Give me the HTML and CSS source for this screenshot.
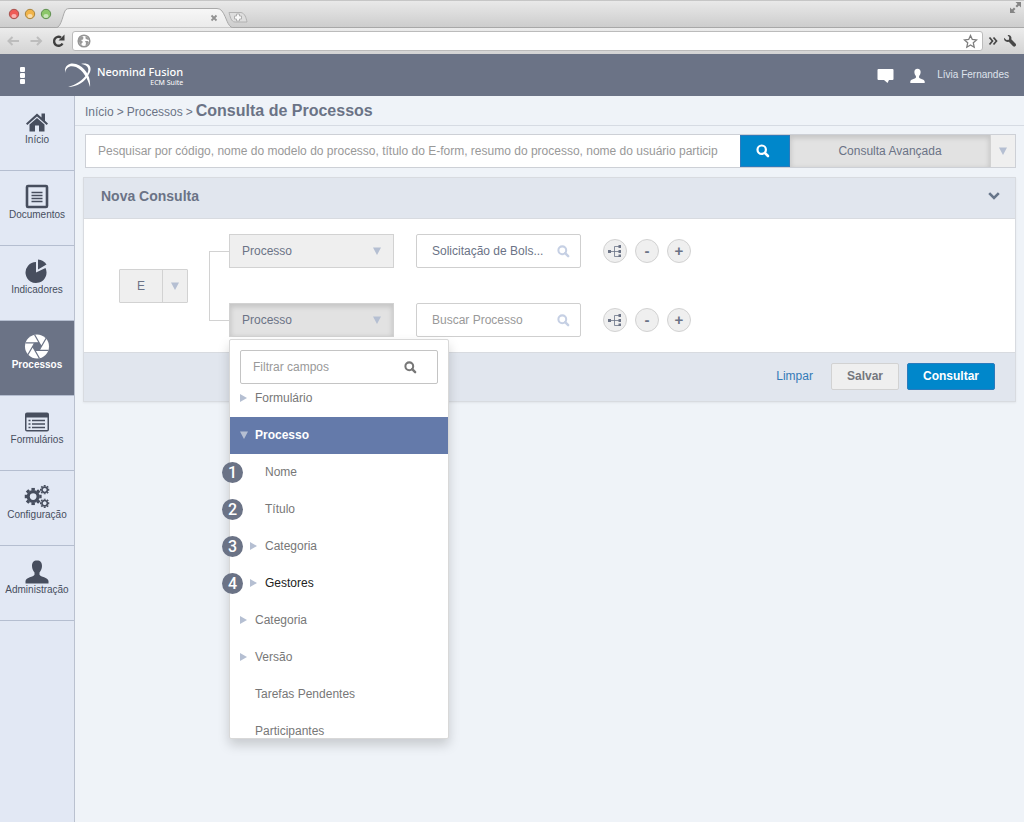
FILE: index.html
```html
<!DOCTYPE html>
<html lang="pt-BR">
<head>
<meta charset="utf-8">
<title>Consulta de Processos</title>
<link rel="stylesheet" href="styles.css">
</head>
<body>
<svg class="sprite" aria-hidden="true">
  <symbol id="search" viewBox="0 0 14 14"><circle cx="5.700" cy="5.700" r="4.200" fill="none" stroke="currentColor" stroke-width="2.200"/><path d="M8.800 8.800 12 12" stroke="currentColor" stroke-width="2.600" stroke-linecap="round"/></symbol>
  <symbol id="user" viewBox="0 0 24 24"><path d="M12 1C8.500 1 7 3 7 6.500 7 9.500 8.300 11.500 9.500 13v2.300C8.500 17.500 1 18 .5 21.500V24h23v-2.500C23 18 15.500 17.500 14.500 15.300V13C15.700 11.500 17 9.500 17 6.500 17 3 15.500 1 12 1z" fill="currentColor"/></symbol>
  <symbol id="tree" viewBox="0 0 14 12"><path d="M2 6.500h9M6.500 1.500v10M6.500 1.500H11M6.500 11.500H11" fill="none" stroke="currentColor" stroke-width=".8"/><path d="M0 5h3v3H0zM10.500 0h2.500v3h-2.500zM10.500 5h2.500v3h-2.500zM10.500 9.500h2.500V12h-2.500z" fill="currentColor"/></symbol>
  <symbol id="gear" viewBox="-10 -10 20 20"><circle r="5.700" fill="none" stroke="currentColor" stroke-width="3.600"/><path d="M-2-10h4v3h-4zM-2 7h4v3h-4zM-10-2h3v4h-3zM7-2h3v4H7z" fill="currentColor"/><path d="M-2-10h4v3h-4zM-2 7h4v3h-4zM-10-2h3v4h-3zM7-2h3v4H7z" fill="currentColor" transform="rotate(45)"/></symbol>
  <symbol id="right" viewBox="0 0 8 8"><path d="M0 0 7 4 0 8z" fill="#b5bfd2"/></symbol>
  <symbol id="down" viewBox="0 0 8 8"><path d="M0 .5h8L4 8z" fill="#b5bfd2"/></symbol>
</svg>

<div class="browser">
  <div class="tabstrip">
    <svg class="lights" width="46" height="14" viewBox="0 0 46 14" aria-hidden="true">
      <g stroke-width="1"><circle cx="6" cy="7" r="4.700" fill="#ee5b57" stroke="#a5524e"/><circle cx="22" cy="7" r="4.700" fill="#f1b44a" stroke="#a8843e"/><circle cx="38" cy="7" r="4.700" fill="#8cc76a" stroke="#5f8f50"/></g>
      <g fill="#fff" opacity=".55"><ellipse cx="6" cy="9" rx="2.600" ry="2"/><ellipse cx="22" cy="9" rx="2.600" ry="2"/><ellipse cx="38" cy="9" rx="2.600" ry="2"/></g>
    </svg>
    <svg class="tab" width="196" height="20" viewBox="0 0 196 20" aria-hidden="true">
      <defs><linearGradient id="tabfill" x1="0" y1="0" x2="0" y2="1"><stop offset="0" stop-color="#f7f7f7"/><stop offset="1" stop-color="#eaeaea"/></linearGradient></defs>
      <path d="M0 20C6 19 7 4 10 1.500Q11 .5 14 .5H161Q164 .5 166 3C171 10 171 18 177 20z" fill="url(#tabfill)" stroke="#a9a9a9"/>
      <path d="M155.500 7.500l5 5M160.500 7.500l-5 5" stroke="#929292" stroke-width="1.800"/>
      <path d="M173 4.500h12c4 1 5 5 6 9.500h-12c-4 0-5-6-6-9.500z" fill="#dedede" stroke="#b2b2b2"/>
      <path d="M180.500 6h3v2h2v3h-2v2h-3v-2h-2V8h2z" fill="#fafafa" stroke="#b0b0b0"/>
    </svg>
    <svg class="expand" width="13" height="13" viewBox="0 0 13 13" aria-hidden="true"><path d="M6.500 1H12v5.500L10 4.500 8 6.500 6.500 5l2-2zM1 6.500l2 2 2-2L6.500 8l-2 2 2 2H1z" fill="#858585"/></svg>
  </div>
  <div class="toolbar">
    <svg width="60" height="16" viewBox="0 0 60 16" aria-hidden="true">
      <path d="M6.500 4 2.500 8l4 4M3 8h10M31 4l4 4-4 4M34.500 8h-10" fill="none" stroke="#bdbdbd" stroke-width="2"/>
      <path d="M56.500 10.500A4.500 4.500 0 1 1 55 4.500" fill="none" stroke="#3f3f3f" stroke-width="2.400"/><path d="M58.500 1.500v6h-6z" fill="#3f3f3f"/>
    </svg>
    <div class="address">
      <svg width="14" height="14" viewBox="0 0 14 14" aria-hidden="true"><circle cx="7" cy="7" r="5.800" fill="#fff" stroke="#959595" stroke-width="1.500"/><path d="M2 4 5 2l1.500 1.500L6 5.500 4 6l2 2-1.500 1.500L4.500 12 3 10 1.500 7zM8.500 2l3 2 .5 2-2-.5-1.500-1zM8 7l3 0 1 1.500-2 3H8.500L9 9z" fill="#999"/></svg>
      <input class="url" type="text" aria-label="Endereço">
      <svg width="15" height="15" viewBox="0 0 15 15" aria-hidden="true"><path d="m7.500 1.500 1.800 4 4.200.4-3.200 2.900.9 4.400-3.700-2.300-3.700 2.300.9-4.400L1.500 5.900l4.200-.4z" fill="#fff" stroke="#7d7d7d" stroke-width="1.300"/></svg>
    </div>
    <svg width="10" height="10" viewBox="0 0 10 10" aria-hidden="true"><path d="m1.500 1.500 3 3.500-3 3.500M5.500 1.500l3 3.500-3 3.500" fill="none" stroke="#454545" stroke-width="1.700"/></svg>
    <svg width="14" height="14" viewBox="0 0 14 14" aria-hidden="true"><path d="M4.500 1C7.500.5 9 3 8.300 5.200l4.400 4.600c1.200 1.800-.9 3.700-2.600 2.400L5.800 7.700C3 8.500.5 6.500 1 3.800L3.500 6 6 5.700 6.200 3.300z" fill="#484848"/></svg>
  </div>
</div>

<header class="topbar">
  <button class="plain dots" type="button" aria-label="Menu"><svg width="5" height="17" viewBox="0 0 5 17"><g fill="#fff"><rect width="5" height="5" rx="1"/><rect y="6" width="5" height="5" rx="1"/><rect y="12" width="5" height="5" rx="1"/></g></svg></button>
  <div class="brand">
    <svg width="27" height="25" viewBox="0 0 27 25" aria-hidden="true"><g fill="#fff"><path d="M0 10C-1 3 4-1 11 1c9 3 15 12 14 23-2-8-7-17-14-20C5 2 1 4 0 10z"/><path d="M16 1c8-2 12 3 8 10-4 8-12 13-21 13 8-2 15-7 19-13 3-5 1-9-6-10z"/></g></svg>
    <div class="names"><span class="name">Neomind Fusion</span><span class="suite">ECM Suite</span></div>
  </div>
  <div class="account">
    <svg width="17" height="15" viewBox="0 0 17 15" aria-hidden="true"><path d="M1.500 1h14q1 0 1 1v9q0 1-1 1H12l-1.500 3L7 12H1.500q-1 0-1-1V2q0-1 1-1z" fill="#fff"/></svg>
    <svg class="person" width="15" height="15"><use href="#user"/></svg>
    <span>Lívia Fernandes</span>
  </div>
</header>

<div class="app">
  <nav class="sidebar">
    <a href="#"><svg width="22" height="24" viewBox="0 0 22 24"><path d="M11 4 0 14l1.300 1.500L11 7l9.700 8.500L22 14l-3-2.700V4h-3.500v4z" fill="currentColor"/><path d="M11 8.600 3.500 15v7H9v-6h4v6h5.500v-7z" fill="currentColor"/></svg>Início</a>
    <a href="#"><svg width="24" height="24" viewBox="0 0 24 24"><rect x="2" y="1.500" width="20" height="21" rx="1" fill="none" stroke="currentColor" stroke-width="2.600"/><path d="M6.500 8h11M6.500 11h11M6.500 14h11M6.500 17h11" stroke="currentColor" stroke-width="1.400"/></svg>Documentos</a>
    <a href="#"><svg width="24" height="24" viewBox="0 0 24 24"><path d="M11 2.500V13l9.500-4.500A10.500 10.500 0 1 1 11 2.500z" fill="currentColor"/><path d="M13 0v10l8.500-5Q18.500.5 13 0z" fill="currentColor"/></svg>Indicadores</a>
    <a href="#" class="active"><svg width="26" height="26" viewBox="-13 -13 26 26"><circle r="12.500" fill="#fff"/><path d="M4.500 0 2.250 3.900H-2.250L-4.500 0-2.250-3.900H2.250z" fill="#6b7386"/><path d="M2.250-3.900H-12M4.500 0-2.500-12.200M2.250 3.900 9.500-8.600M-2.250 3.900H12M-4.500 0 2.500 12.200M-2.250-3.900-9.500 8.600" stroke="#6b7386" stroke-width="1.300"/></svg>Processos</a>
    <a href="#"><svg width="24" height="24" viewBox="0 0 24 24"><path d="M2 3h20q2 0 2 2v15q0 2-2 2H2q-2 0-2-2V5q0-2 2-2zM1.500 8v12.500h21V8z" fill="currentColor"/><path d="M3.500 11h2m1.500 0h13M3.500 14.500h2m1.500 0h13M3.500 18h2m1.500 0h13" stroke="currentColor" stroke-width="1.700"/></svg>Formulários</a>
    <a href="#"><svg width="26" height="26" viewBox="0 0 26 26"><use href="#gear" x="0" y="4" width="18" height="18"/><use href="#gear" x="16" y="1" width="10" height="10"/><use href="#gear" x="16" y="15" width="10" height="10"/></svg>Configuração</a>
    <a href="#"><svg width="24" height="22"><use href="#user"/></svg>Administração</a>
  </nav>

  <main>
    <div class="crumbs"><a href="#">Início</a> &gt; <a href="#">Processos</a> &gt; <h1>Consulta de Processos</h1></div>

    <form class="searchbar">
      <input class="query" type="text" aria-label="Pesquisar" placeholder="Pesquisar por código, nome do modelo do processo, título do E-form, resumo do processo, nome do usuário particip">
      <button class="go" type="button" aria-label="Pesquisar"><svg width="14" height="14"><use href="#search"/></svg></button>
      <button class="advanced" type="button">Consulta Avançada</button>
      <button class="more" type="button" aria-label="Mais opções"><svg width="8" height="8"><use href="#down"/></svg></button>
    </form>

    <section class="panel">
      <div class="panel-head"><h2>Nova Consulta</h2><button class="plain" type="button" aria-label="Recolher"><svg width="12" height="8" viewBox="0 0 12 8"><path d="m1.200 1.200 4.800 4.800 4.800-4.800" fill="none" stroke="#67768a" stroke-width="2.600"/></svg></button></div>
      <div class="panel-body">
        <div class="operator">
          <select aria-label="Operador"><option>E</option><option>OU</option></select>
          <span class="split"><svg width="8" height="8"><use href="#down"/></svg></span>
        </div>
        <div class="conditions">
          <div class="condition">
            <div class="picker"><select aria-label="Campo 1"><option>Processo</option></select><svg class="arrow" width="8" height="8"><use href="#down"/></svg></div>
            <label class="field"><input type="text" aria-label="Valor 1" value="Solicitação de Bols..."><svg width="13" height="13"><use href="#search"/></svg></label>
            <div class="actions"><button type="button" aria-label="Agrupar"><svg width="14" height="12"><use href="#tree"/></svg></button><button type="button">-</button><button type="button">+</button></div>
          </div>
          <div class="condition">
            <div class="picker open"><select aria-label="Campo 2"><option>Processo</option></select><svg class="arrow" width="8" height="8"><use href="#down"/></svg>
              <div class="menu">
                <label class="filter"><input type="text" aria-label="Filtrar campos" placeholder="Filtrar campos"><svg width="13" height="13"><use href="#search"/></svg></label>
                <ul>
                  <li class="scrolled"><svg><use href="#right"/></svg>Formulário</li>
                  <li class="selected"><svg><use href="#down"/></svg>Processo</li>
                  <li class="child leaf"><b class="badge">1</b>Nome</li>
                  <li class="child leaf"><b class="badge">2</b>Título</li>
                  <li class="child"><b class="badge">3</b><svg><use href="#right"/></svg>Categoria</li>
                  <li class="child hover"><b class="badge">4</b><svg><use href="#right"/></svg>Gestores</li>
                  <li><svg><use href="#right"/></svg>Categoria</li>
                  <li><svg><use href="#right"/></svg>Versão</li>
                  <li class="leaf">Tarefas Pendentes</li>
                  <li class="leaf">Participantes</li>
                </ul>
              </div>
            </div>
            <label class="field"><input type="text" aria-label="Valor 2" placeholder="Buscar Processo"><svg width="13" height="13"><use href="#search"/></svg></label>
            <div class="actions"><button type="button" aria-label="Agrupar"><svg width="14" height="12"><use href="#tree"/></svg></button><button type="button">-</button><button type="button">+</button></div>
          </div>
        </div>
      </div>
      <div class="panel-foot">
        <a href="#">Limpar</a>
        <button class="save" type="button">Salvar</button>
        <button class="run" type="button">Consultar</button>
      </div>
    </section>
  </main>
</div>
</body>
</html>
```
FILE: styles.css
```css
* { box-sizing: border-box; }
body {
  margin: 0;
  min-height: 100vh;
  display: flex;
  flex-direction: column;
  background: #eff3f8;
  color: #6b7386;
  font: 12px/18px "Liberation Sans", Arial, sans-serif;
}
button, input, select { font: inherit; color: inherit; margin: 0; }
input, select { min-width: 0; }
input:focus { outline: none; }
input::placeholder { color: #999; opacity: 1; }
a { color: inherit; text-decoration: none; }
svg { display: block; flex: none; }
h1, h2 { margin: 0; }
.sprite { position: absolute; width: 0; height: 0; }
.plain { border: 0; padding: 0; background: none; }

/* Browser frame */
.tabstrip {
  display: flex;
  align-items: flex-end;
  height: 28px;
  padding-left: 8px;
  background: linear-gradient(#e9e9e9, #cdcdcd);
  border-top: 1px solid #c6c6c6;
  border-bottom: 1px solid #a8a8a8;
}
.lights { margin-bottom: 6px; }
.tab { margin: 0 auto -1px 2px; }
.expand { align-self: flex-start; margin-right: 2px; }
.toolbar {
  display: flex;
  align-items: center;
  gap: 5px;
  height: 26px;
  padding: 0 7px 0 6px;
  background: linear-gradient(#ececec, #d3d3d3);
}
.address {
  flex: 1;
  display: flex;
  align-items: center;
  height: 20px;
  margin-left: 1px;
  padding: 0 4px;
  background: #fff;
  border: 1px solid #bbb;
  border-radius: 3px;
}
.url { flex: 1; height: 16px; border: 0; background: none; }

/* Application header */
.topbar {
  display: flex;
  align-items: center;
  height: 42px;
  padding: 0 15px 0 20px;
  background: #6b7386;
  color: #fff;
}
.brand { display: flex; align-items: center; gap: 5px; margin-left: 40px; }
.names { display: flex; flex-direction: column; align-items: flex-end; padding-top: 4px; }
.name { font: 500 11px/12px "Noto Sans", sans-serif; }
.suite { font: 7px/10px "Noto Sans", sans-serif; }
.account {
  display: flex;
  align-items: center;
  gap: 10px;
  margin-left: auto;
  color: #dfe3ec;
  font-size: 10px;
}
.person { color: #fff; margin: 0 2px 0 6px; }

/* Side navigation */
.app { flex: 1; display: flex; }
.sidebar {
  flex: none;
  width: 75px;
  background: #e2e8f4;
  border-right: 1px solid #bac1cf;
}
.sidebar a {
  display: flex;
  flex-direction: column;
  align-items: center;
  height: 75px;
  padding-top: 13px;
  border-bottom: 1px solid #b5bed0;
  color: #474e5e;
  font-size: 10px;
  line-height: 12px;
  white-space: nowrap;
}
.sidebar svg { height: 25px; }
.sidebar .active { background: #6b7386; color: #fff; font-weight: bold; }

main { flex: 1; min-width: 0; }
.crumbs {
  display: flex;
  align-items: baseline;
  gap: 3px;
  height: 30px;
  padding: 5px 10px 4px;
  border-bottom: 1px solid #d6dbe3;
}
.crumbs h1 { font-size: 16px; line-height: 20px; }

/* Search bar */
.searchbar {
  display: flex;
  height: 34px;
  margin: 8px 8px 9px 10px;
  border: 1px solid #cdd0d6;
  background: #fff;
}
.query { flex: 1; padding: 0 12px; border: 0; background: #fff; }
.go, .advanced, .more { display: flex; align-items: center; justify-content: center; padding: 0; border: 0; }
.go { width: 50px; padding-right: 4px; background: #0087cb; border: 1px solid #2b7bbd; color: #fff; }
.advanced { width: 200px; background: #e2e2e2; box-shadow: inset 0 2px 5px 1px rgba(0, 0, 0, .13); }
.more { width: 25px; background: #efefef; border-left: 1px solid #d2d2d2; }

/* Query panel */
.panel {
  margin: 0 8px;
  border: 1px solid #d8dbe0;
  box-shadow: 0 1px 2px rgba(0, 0, 0, .06);
}
.panel-head {
  display: flex;
  align-items: center;
  justify-content: space-between;
  height: 41px;
  padding: 0 15px 4px 17px;
  background: #e1e6ee;
  border-bottom: 1px solid #d8dbe0;
}
.panel-head h2 { font-size: 14px; }
.panel-body {
  display: flex;
  align-items: center;
  gap: 21px;
  padding: 15px 35px;
  background: #fff;
}
.operator {
  display: flex;
  width: 69px;
  height: 34px;
  border: 1px solid #d2d2d2;
  border-radius: 1px;
  background: #efefef;
}
.operator select {
  flex: 1;
  appearance: none;
  border: 0;
  padding: 0;
  background: none;
  text-align: center;
  text-align-last: center;
}
.split { display: flex; align-items: center; padding: 0 8px; border-left: 1px solid #d2d2d2; }
.conditions { position: relative; display: flex; flex-direction: column; gap: 35px; padding-left: 20px; }
.conditions::before {
  content: "";
  position: absolute;
  left: 0;
  top: 17px;
  bottom: 16px;
  width: 20px;
  border: 1px solid #d2d2d2;
  border-right: 0;
}
.condition { display: flex; align-items: center; gap: 22px; }
.picker { position: relative; width: 165px; height: 34px; }
.picker select {
  appearance: none;
  width: 100%;
  height: 100%;
  padding: 0 12px;
  border: 1px solid #d2d2d2;
  border-radius: 0;
  background: #efefef;
}
.picker.open select { background: #e2e2e2; box-shadow: inset 0 2px 5px 1px rgba(0, 0, 0, .13); }
.arrow { position: absolute; right: 13px; top: 13px; pointer-events: none; }
.field, .filter {
  display: flex;
  align-items: center;
  height: 34px;
  border: 1px solid #cfcfcf;
  border-radius: 2px;
  background: #fff;
}
.field { width: 165px; padding: 0 10px 0 15px; color: #c6d0e4; }
.field input, .filter input { flex: 1; width: 0; padding: 0; border: 0; background: none; }
.field input { color: #6b7386; }
.actions { display: flex; gap: 8px; }
.actions button {
  display: flex;
  align-items: center;
  justify-content: center;
  width: 24px;
  height: 24px;
  padding: 0;
  border: 1px solid #d2d2d2;
  border-radius: 50%;
  background: #efefef;
  font-size: 15px;
  font-weight: bold;
}

/* Field menu */
.menu {
  position: absolute;
  z-index: 2;
  top: 36px;
  left: 0;
  width: 220px;
  height: 400px;
  padding-top: 10px;
  overflow-y: clip;
  border: 1px solid #d8d8d8;
  border-radius: 2px;
  background: #fff;
  box-shadow: 0 6px 12px rgba(0, 0, 0, .17);
  color: #777;
}
.filter { margin: 0 10px; padding: 0 20px 0 12px; border-color: #c4c4c4; }
.menu ul { list-style: none; margin: 0; padding: 0; }
.menu li { position: relative; display: flex; align-items: center; gap: 7px; height: 37px; padding: 0 10px 2px; }
.menu li svg { width: 8px; height: 8px; }
.menu .scrolled { height: 33px; padding-bottom: 5px; }
.menu .leaf { padding-left: 25px; }
.menu .child { padding-left: 20px; }
.menu .child.leaf { padding-left: 35px; }
.menu .selected { background: #647aaa; color: #fff; font-weight: bold; }
.menu .hover { color: #222; }
.badge {
  position: absolute;
  left: -8px;
  top: 8px;
  width: 21px;
  border-radius: 50%;
  background: #6b7386;
  color: #fff;
  font: 500 16px/21px Roboto, "Liberation Sans", sans-serif;
  text-align: center;
}

.panel-foot {
  display: flex;
  align-items: center;
  justify-content: flex-end;
  gap: 8px;
  height: 49px;
  padding: 0 20px 2px;
  background: #e1e6ee;
  border-top: 1px solid #d8dbe0;
}
.panel-foot a { margin-right: 10px; color: #337ab7; }
.panel-foot button { height: 27px; padding: 0 15px; border-radius: 2px; font-weight: bold; }
.save { border: 1px solid #d2d2d2; background: #efefef; color: #74777d; }
.run { border: 1px solid #2b7bbd; background: #0087cb; color: #fff; }
```
